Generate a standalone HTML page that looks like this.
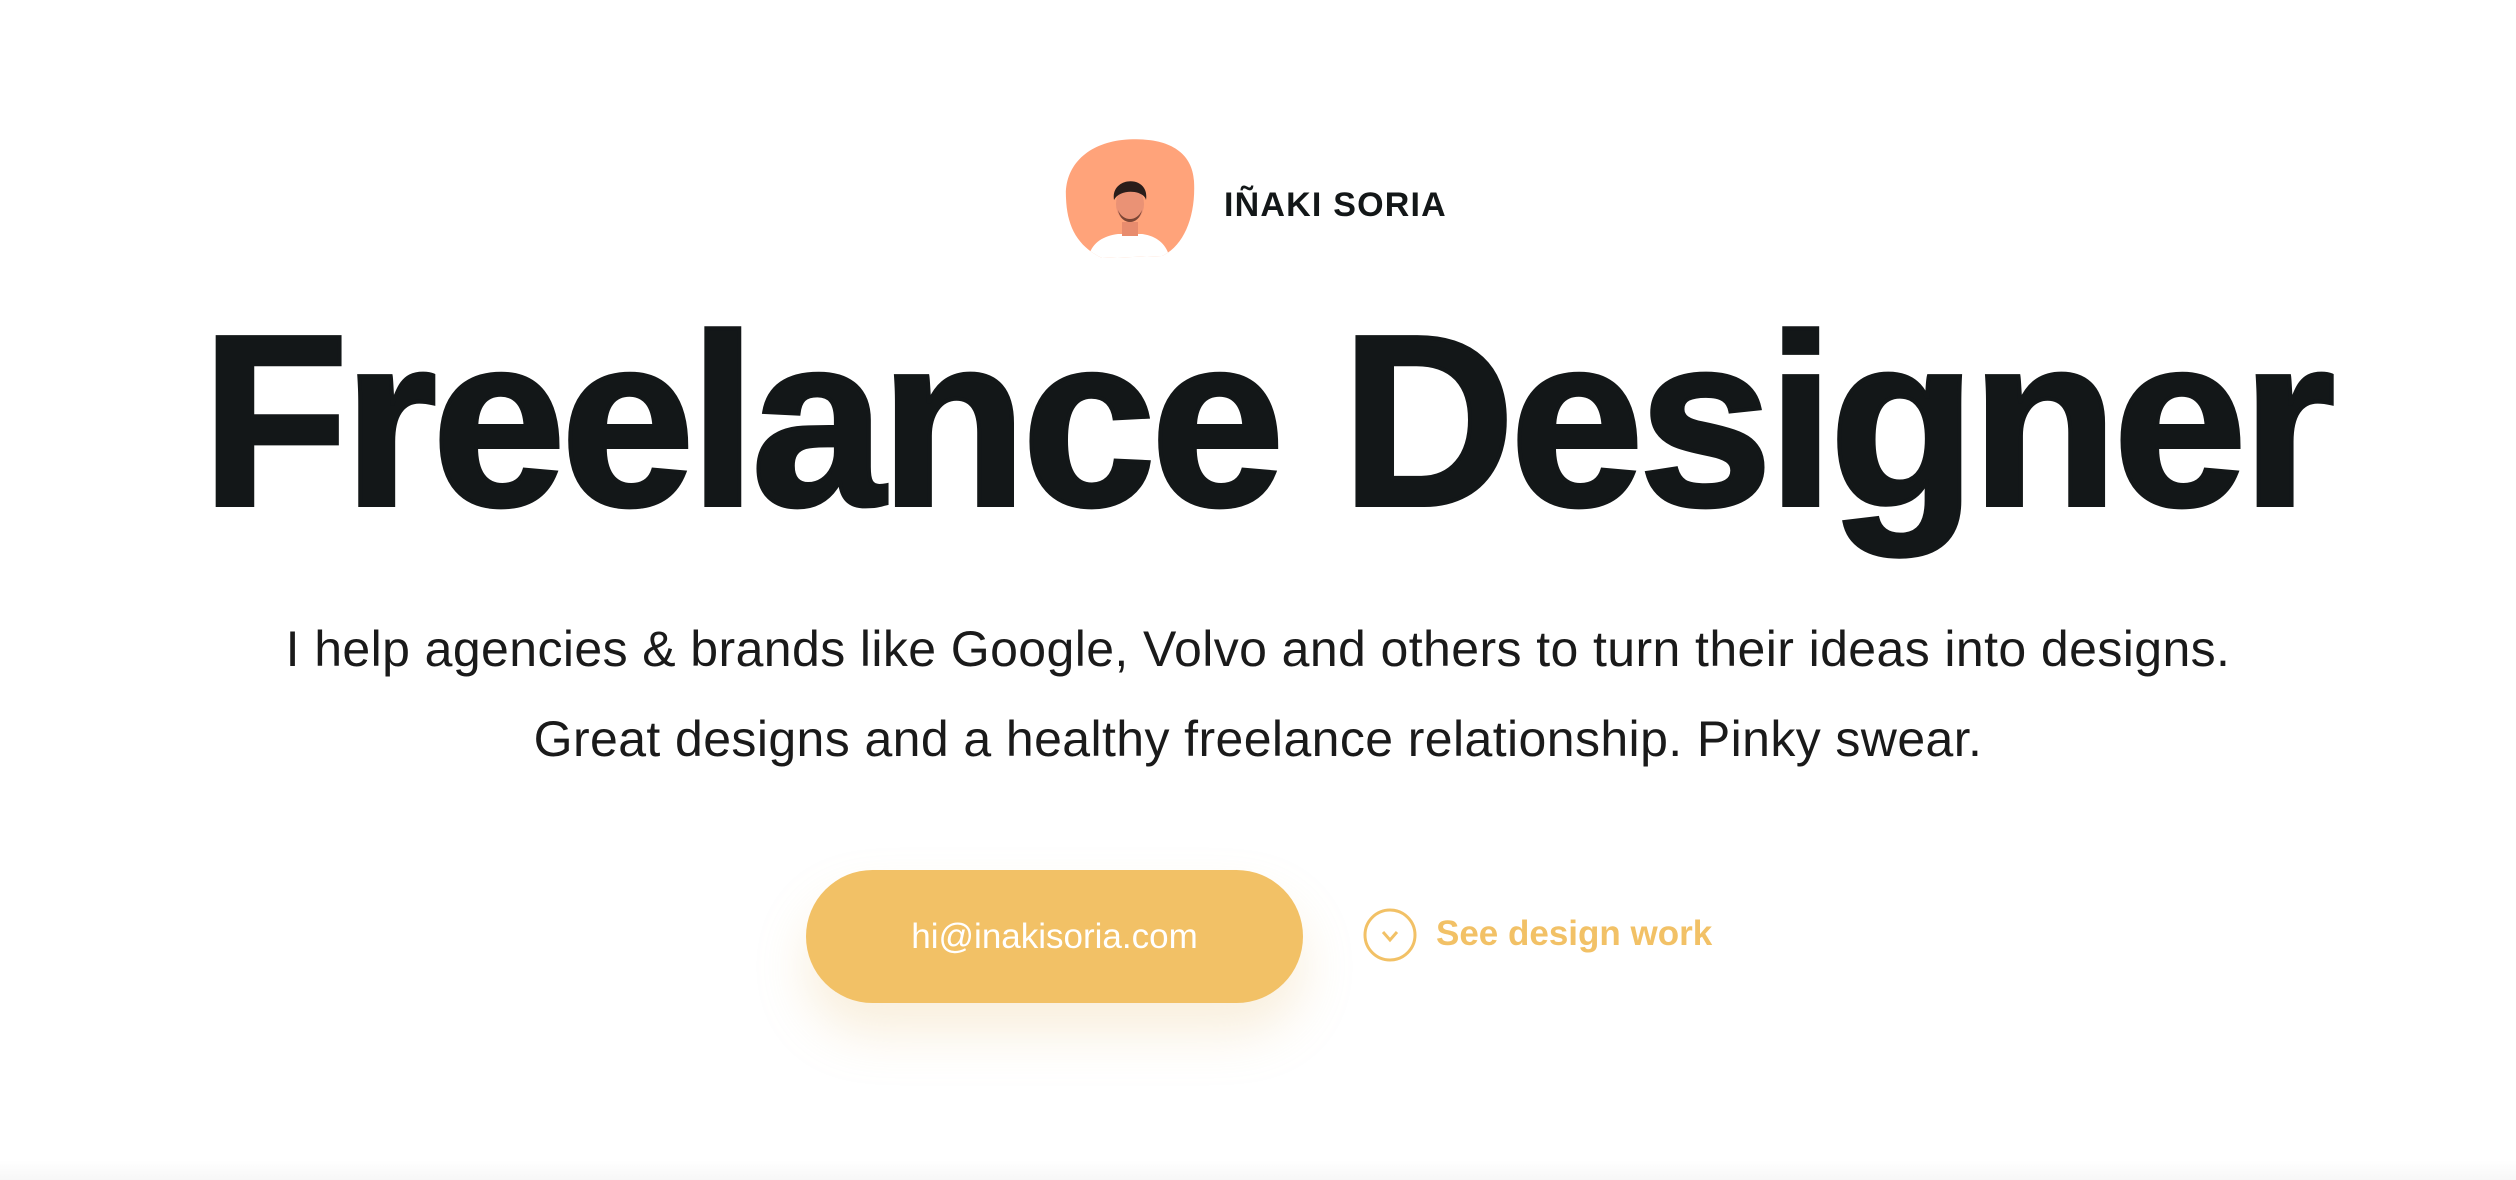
<!DOCTYPE html>
<html><head><meta charset="utf-8"><style>
html,body{margin:0;padding:0;background:#fff;width:2516px;height:1180px;overflow:hidden;font-family:"Liberation Sans",sans-serif;}
.abs{position:absolute;}
#name{left:1224px;top:186px;font-size:34px;font-weight:bold;letter-spacing:1.2px;color:#131718;}
#h1{left:8px;width:2516px;top:297px;text-align:center;font-size:244px;font-weight:bold;letter-spacing:-5px;color:#131718;line-height:248px;-webkit-text-stroke:4px #131718;white-space:nowrap;transform:scaleX(0.985);transform-origin:1258px 0;}
.sub{left:0;width:2516px;text-align:center;font-size:50px;color:#1a1a1a;letter-spacing:0.4px;}
#btn{left:806px;top:870px;width:497px;height:133px;border-radius:67px;background:#f2c166;color:#fff;font-size:35px;text-align:center;line-height:133px;box-shadow:0 30px 50px rgba(230,190,120,0.25);}
#see{left:1436px;top:914px;font-size:35px;font-weight:bold;color:#f2c166;}
#bottom{left:0;top:1160px;width:2516px;height:20px;background:linear-gradient(#fff,#f7f7f7);}
</style></head><body>
<svg class="abs" style="left:1062px;top:136px" width="136" height="124" viewBox="0 0 136 124">
<defs><clipPath id="c"><path d="M4 62 C2 30 25 8 60 4 C100 0 130 12 132 45 C134 80 122 110 100 120 L40 122 C15 110 5 90 4 62Z"/></clipPath></defs>
<g clip-path="url(#c)">
<rect width="136" height="124" fill="#ffa37a"/>
<path d="M26 124 C28 108 40 100 56 98 L80 98 C96 100 106 110 108 124Z" fill="#fff"/>
<rect x="60" y="86" width="16" height="14" fill="#e88c6e"/>
<ellipse cx="68" cy="68" rx="14" ry="18" fill="#ea9275"/>
<path d="M52 64 C48 40 88 38 84 64 C82 54 58 52 52 64Z" fill="#2a1d1a"/>
<path d="M56 74 C59 90 77 90 80 74 C75 86 61 86 56 74Z" fill="#7a4535"/>
</g></svg>
<div class="abs" id="name">IÑAKI SORIA</div>
<div class="abs" id="h1">Freelance Designer</div>
<div class="abs sub" style="top:620px">I help agencies &amp; brands like Google, Volvo and others to turn their ideas into designs.</div>
<div class="abs sub" style="top:710px">Great designs and a healthy freelance relationship. Pinky swear.</div>
<div class="abs" id="btn">hi@inakisoria.com</div>
<svg class="abs" style="left:1362px;top:907px" width="56" height="56" viewBox="0 0 56 56"><circle cx="28" cy="28" r="25" fill="none" stroke="#f2c166" stroke-width="3"/><path d="M21 25 L28 33 L35 25" fill="none" stroke="#f2c166" stroke-width="3"/></svg>
<div class="abs" id="see">See design work</div>
<div class="abs" id="bottom"></div>
</body></html>
